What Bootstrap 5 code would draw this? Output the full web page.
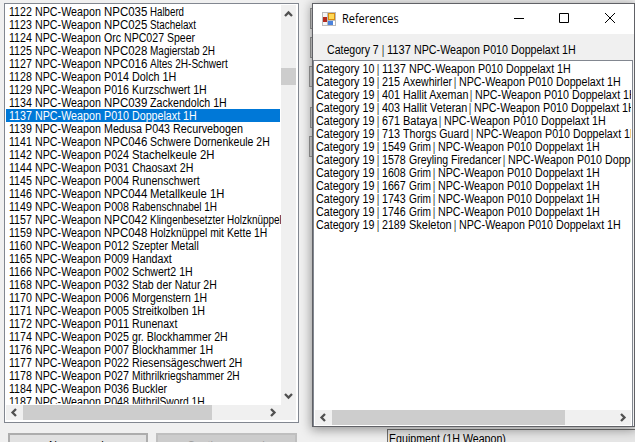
<!DOCTYPE html>
<html lang="en">
<head>
<meta charset="utf-8">
<meta name="viewport" content="width=device-width, initial-scale=1">
<title>References</title>
<link href="https://cdn.jsdelivr.net/npm/bootstrap@5.3.0/dist/css/bootstrap.min.css" rel="stylesheet">
<style>
body{width:635px;height:442px;background:#f0f0f0;font:12px/13px "Liberation Sans",Arial,sans-serif;color:#000}
.main-pane{width:295px;margin:3px 0 0 4px}
.weapon-list{height:420px;border:1px solid #828790;background:#fff;padding:1px}
.weapon-rows{width:275px;height:399px;margin-bottom:1px}
.line{height:13px;padding-left:3px;white-space:pre;line-height:13px}
.line.chosen{background:#0078d7;color:#fff;width:274px}
.seg{display:inline-block;height:13px;vertical-align:top;flex:none}
.seg b{font-weight:400;display:inline-block;transform-origin:0 0;white-space:pre;line-height:14px}
.vbar{width:15px;height:400px;background:#f0f0f0}
.hbar{height:15px;background:#f0f0f0}
.thumb{background:#cdcdcd}
.arrow{fill:none;stroke:#505050;stroke-width:2.3}
.win-btn{height:20px;border:2px solid #adadad;background:#e1e1e1;border-bottom:0}
.win-btn.off{border-color:#bfbfbf;background:#ccc;color:#a0a0a0}
.stub{width:5px;height:21px;border:1px solid #999;background:#d6d6d6}
.dialog-win{left:312px;top:3px;width:323px;height:424px;border:1px solid #606166;background:#f0f0f0;box-shadow:0 2px 10px 1px rgba(0,0,0,.38)}
.title-strip{height:30px;background:#fff;font:12.3px/30px "Open Sans","Noto Sans",sans-serif}
.caption{height:26px;padding:9px 0 0 14px}
.ref-list{width:320px;height:366px;border:1px solid #828790;border-bottom:0;background:#fff;padding:1px 1px 1px 0}
.ref-list .line{padding-left:2px}
.equip{left:387px;top:429px;width:248px;height:13px;border:1px solid #707070;border-width:1px 0 0 1px;background:#e6e6e6;padding:2px 0 0 1px}
</style>
<script src="https://cdn.jsdelivr.net/npm/bootstrap@5.3.0/dist/js/bootstrap.bundle.min.js"></script>
</head>
<body class="position-relative overflow-hidden m-0">
<main class="main-pane">
  <div class="weapon-list">
    <div class="d-flex">
      <div id="weapons" class="weapon-rows overflow-hidden"></div>
      <div class="vbar d-flex flex-column">
        <svg width="15" height="17"><path class="arrow" d="M4 11l3.5-3.5L11 11"/></svg>
        <div class="thumb" style="height:17px;margin-top:46px"></div>
        <svg class="mt-auto" width="15" height="17"><path class="arrow" d="M4 6l3.500 3.500L11 6"/></svg>
      </div>
    </div>
    <div class="hbar d-flex" style="width:290px">
      <svg width="17" height="15"><path class="arrow" d="M10 4L6.500 7.500L10 11"/></svg>
      <div class="thumb" style="width:189px"></div>
      <svg style="margin-left:52px" width="17" height="15"><path class="arrow" d="M7 4l3.500 3.500L7 11"/></svg>
    </div>
  </div>
  <div class="d-flex" style="margin:10px 0 0 4px;gap:8px">
    <div class="win-btn overflow-hidden" style="width:140px;padding:4px 0 0 39px"><span class="seg" data-w="58">New search</span></div>
    <div class="win-btn off overflow-hidden" style="width:141px;padding:4px 0 0 29px"><span class="seg" data-w="81">Continue search</span></div>
  </div>
</main>
<div class="position-absolute" style="left:310px;top:8px">
  <div class="stub"></div><div class="stub" style="margin-top:8px"></div><div class="stub" style="margin:8px 0 0 -1px"></div>
  <div class="stub" style="margin-top:20px"></div><div class="stub" style="margin:8px 0 0 -1px"></div>
</div>
<div class="equip position-absolute"><span class="seg" data-w="117">Equipment (1H Weapon)</span></div>
<section class="dialog-win position-absolute">
  <div class="title-strip d-flex align-items-center">
    <svg style="margin-left:9px" width="14" height="14"><path fill="#bbb" d="M0 0h14v14H0z"/><path fill="#f5f5f5" d="M1 1h4v4H1zM1 10h4v3H1z"/><path fill="#b52a1c" d="M1 5h4v5H1z"/><path fill="#d68a10" d="M6 1h7v7H6z"/><path fill="#ffd955" d="M7 2h5v5H7z"/><path fill="#fff" d="M6 9h7v4H6z"/><path fill="#4b82dc" d="M6 9h5v4H6z"/></svg>
    <span class="seg" data-w="57" style="height:30px;margin-left:6px"><b style="line-height:30px">References</b></span>
    <svg class="ms-auto" width="120" height="30" fill="none" stroke="#000"><path d="M0 14.500h10M45.500 9.500h9v9h-9zM91 9l10 10M101 9L91 19"/></svg>
  </div>
  <div class="caption"><div id="caption" class="d-flex"></div></div>
  <div class="ref-list">
    <div id="refs" class="overflow-hidden" style="height:348px"></div>
    <div class="hbar d-flex" style="margin-left:1px">
      <svg width="17" height="15"><path class="arrow" d="M10 4L6.500 7.500L10 11"/></svg>
      <div class="thumb" style="width:233px"></div>
      <svg class="ms-auto" width="17" height="15"><path class="arrow" d="M7 4l3.500 3.500L7 11"/></svg>
    </div>
  </div>
</section>
<script>
// Rows: number, item code, name, right edge of the text.
const weapons = `1122|NPC035|Halberd|184
1123|NPC025|Stachelaxt|196
1124|Orc NPC027|Speer|195
1125|NPC028|Magierstab 2H|215
1127|NPC016|Altes 2H-Schwert|228
1128|P014|Dolch 1H|176
1129|P016|Kurzschwert 1H|207
1134|NPC039|Zackendolch 1H|227
1137|P010|Doppelaxt 1H|197
1139|Medusa P043|Recurvebogen|243
1141|NPC046|Schwere Dornenkeule 2H|270
1142|P024|Stachelkeule 2H|214
1144|P031|Chaosaxt 2H|193
1145|P004|Runenschwert|200
1146|NPC044|Metallkeule 1H|224
1149|P008|Rabenschnabel 1H|217
1157|NPC042|Klingenbesetzter Holzknüppel|282
1159|NPC048|Holzknüppel mit Kette 1H|267
1160|P012|Szepter Metall|199
1165|P009|Handaxt|172
1166|P002|Schwert2 1H|193
1168|P032|Stab der Natur 2H|217
1170|P006|Morgenstern 1H|207
1171|P005|Streitkolben 1H|205
1172|P011|Runenaxt|177
1174|P025|gr. Blockhammer 2H|228
1176|P007|Blockhammer 1H|213
1177|P022|Riesensägeschwert 2H|242
1178|P027|Mithrilkriegshammer 2H|240
1184|P036|Buckler|167
1187|P048|MithrilSword 1H|205`.split('\n').map(s => s.split('|'));
const codeWidth = {4: 25, 6: 43, 10: 60, 11: 66};
const seg = (text, w, gap) => `<span class="seg" data-w="${w}" style="margin-right:${gap}px">${text}</span>`;
document.getElementById('weapons').innerHTML = weapons.map(([n, code, name, end]) => {
  const cw = codeWidth[code.length], start = 104 + cw + 3;
  return `<div class="line d-flex${n === '1137' ? ' chosen' : ''}">` + seg(n, 23, 3) + seg('NPC-Weapon', 66, 3) + seg(code, cw, 3) + seg(name, end - start, 0) + '</div>';
}).join('');
// Rows: category, number, creature, position of the second divider.
const refs = [[10, 1137], [19, 215, 'Axewhirler', 455], [19, 401, 'Hallit Axeman', 471], [19, 403, 'Hallit Veteran', 470], [19, 671, 'Bataya', 440], [19, 713, 'Thorgs Guard', 472], [19, 1549, 'Grim', 434], [19, 1578, 'Greyling Firedancer', 504], [19, 1608, 'Grim', 434], [19, 1667, 'Grim', 434], [19, 1743, 'Grim', 434], [19, 1746, 'Grim', 434], [19, 2189, 'Skeleton', 455]];
const item = seg('NPC-Weapon', 66, 3) + seg('P010', 25, 3) + seg('Doppelaxt 1H', 65, 0);
document.getElementById('refs').innerHTML = refs.map(([cat, n, who, bar]) => {
  const nw = n > 999 ? 24 : 18;
  return '<div class="line d-flex">' + seg('Category ' + cat, 58, 3) + seg('|', 2, 3) + seg(n, nw, 3) +
    (who ? seg(who, bar - 382 - nw - 6, 2) + seg('|', 2, 3) : '') + item + '</div>';
}).join('');
document.getElementById('caption').innerHTML = seg('Category 7', 52, 3) + seg('|', 2, 3) + seg('1137', 24, 3) + item;
// Condense each word run to its own width.
document.querySelectorAll('.seg').forEach(s => {
  if (!s.querySelector('b')) s.innerHTML = '<b>' + s.innerHTML + '</b>';
  const b = s.firstElementChild, w = +s.dataset.w;
  b.style.transform = `scaleX(${w / b.offsetWidth})`;
  s.style.width = w + 'px';
});
</script>
</body>
</html>
